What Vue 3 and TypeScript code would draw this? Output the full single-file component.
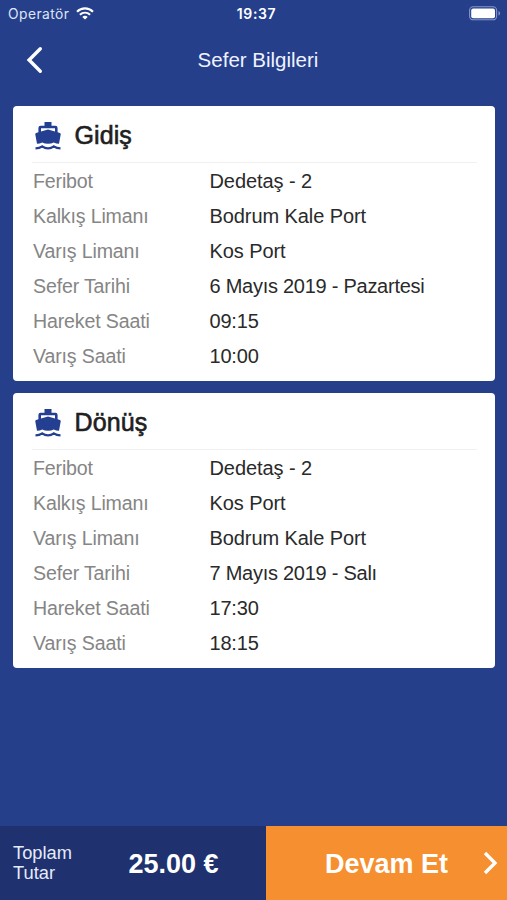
<script setup lang="ts">
interface Row {
  label: string
  value: string
  kind?: 'date' | 'time'
}
interface Trip {
  title: string
  rows: Row[]
}

const trips: Trip[] = [
  {
    title: 'Gidiş',
    rows: [
      { label: 'Feribot', value: 'Dedetaş - 2' },
      { label: 'Kalkış Limanı', value: 'Bodrum Kale Port' },
      { label: 'Varış Limanı', value: 'Kos Port' },
      { label: 'Sefer Tarihi', value: '6 Mayıs 2019 - Pazartesi', kind: 'date' },
      { label: 'Hareket Saati', value: '09:15', kind: 'time' },
      { label: 'Varış Saati', value: '10:00', kind: 'time' },
    ],
  },
  {
    title: 'Dönüş',
    rows: [
      { label: 'Feribot', value: 'Dedetaş - 2' },
      { label: 'Kalkış Limanı', value: 'Kos Port' },
      { label: 'Varış Limanı', value: 'Bodrum Kale Port' },
      { label: 'Sefer Tarihi', value: '7 Mayıs 2019 - Salı', kind: 'date' },
      { label: 'Hareket Saati', value: '17:30', kind: 'time' },
      { label: 'Varış Saati', value: '18:15', kind: 'time' },
    ],
  },
]
</script>

<template>
  <div class="screen">
    <div class="status">
      <div class="carrier">
        <span>Operatör</span>
        <svg width="18" height="13" viewBox="0 0 18 13" fill="none" stroke="#fff" stroke-width="2.1">
          <path d="M1 4.7C5.6.2 12.4.2 17 4.7" />
          <path d="M3.9 7.8c3-2.8 7.2-2.8 10.2 0" />
          <path d="M9 12.6 6.3 9.9c1.5-1.4 3.9-1.4 5.4 0z" fill="#fff" stroke="none" />
        </svg>
      </div>
      <span class="clock">19:37</span>
      <svg class="battery" width="32" height="15" viewBox="0 0 32 15">
        <rect x=".6" y=".8" width="27" height="13" rx="3.6" fill="none" stroke="#8796c8" stroke-width="1.1" />
        <rect x="2.2" y="2.4" width="23.8" height="9.8" rx="2" fill="#fff" />
        <path d="M29.5 5c2 .8 2 3.8 0 4.6z" fill="#8796c8" />
      </svg>
    </div>

    <header class="nav">
      <button class="back" aria-label="Geri">
        <svg width="18" height="28" viewBox="0 0 18 28" fill="none" stroke="#fff" stroke-width="3.4" stroke-linecap="round">
          <path d="M14.3 2.800 3.100 14 14.300 25.200" />
        </svg>
      </button>
      <h1>Sefer Bilgileri</h1>
    </header>

    <main class="trips">
      <section v-for="trip in trips" :key="trip.title" class="card">
        <div class="card-head">
          <svg width="26" height="29" viewBox="0 0 26 29">
            <path
              fill="#243f92"
              fill-rule="evenodd"
              d="M9.500 1h7v3.800h3.900q2.200 0 2.200 2.200v4.300l2.300.8q1 .4.800 1.400L24 22.700q-2.900 0-5.200-1.300-2.600 1.300-5.800 1.300t-5.800-1.300Q4.900 22.700 2 22.700L.3 13.500q-.2-1 .8-1.400l2.300-.8V7q0-2.200 2.200-2.200h3.900zM6 7.200v3.300L13 8.500l7 2V7.200z"
            />
            <path d="M.5 27.400q4 0 6.700-2Q9.800 27.400 13 27.400t5.800-2Q21.500 27.400 25.500 27.400" fill="none" stroke="#243f92" stroke-width="2.100" />
          </svg>
          <h2>{{ trip.title }}</h2>
        </div>
        <dl>
          <div v-for="row in trip.rows" :key="row.label" class="row">
            <dt>{{ row.label }}</dt>
            <dd :class="row.kind">{{ row.value }}</dd>
          </div>
        </dl>
      </section>
    </main>

    <footer class="footer">
      <div class="total">
        <span class="total-label">Toplam<br />Tutar</span>
        <strong>25.00 €</strong>
      </div>
      <button class="next">
        <span>Devam Et</span>
        <svg width="16" height="24" viewBox="0 0 16 24" fill="none" stroke="#fff" stroke-width="3.4">
          <path d="M2 2 12 12 2 22" />
        </svg>
      </button>
    </footer>
  </div>
</template>

<style>
body {
  margin: 0;
  background: #253f8b;
}
</style>

<style scoped>
.screen {
  display: flex;
  flex-direction: column;
  height: 900px;
  overflow: hidden;
  background: #253f8b;
  font-family: 'Liberation Sans', Arial, sans-serif;
}
button {
  padding: 0;
  border: 0;
  background: none;
  font: inherit;
  color: inherit;
}
h1,
h2,
dl,
dt,
dd {
  margin: 0;
}
.status {
  display: grid;
  grid-template-columns: 1fr auto 1fr;
  align-items: center;
  height: 27px;
  padding: 0 6px 0 8px;
  color: #fff;
  font-family: Inter, Roboto, sans-serif;
}
.carrier {
  display: flex;
  align-items: center;
  gap: 7px;
  color: #dfe5f7;
  font-size: 13.8px;
  letter-spacing: 0.45px;
}
.clock {
  padding-left: 4px;
  font-weight: 600;
  font-size: 14px;
  letter-spacing: 0.6px;
}
.battery {
  justify-self: end;
}
.nav {
  display: grid;
  grid-template-columns: 60px 1fr 51px;
  align-items: center;
  height: 66px;
}
.back {
  display: flex;
  padding-left: 26px;
}
.nav h1 {
  color: #f0f3ff;
  font-size: 20.5px;
  font-weight: 400;
  text-align: center;
}
.trips {
  display: flex;
  flex: 1;
  flex-direction: column;
  gap: 12px;
  padding: 13px 12px 0 13px;
}
.card {
  box-sizing: border-box;
  height: 275px;
  padding: 0 18px 0 19px;
  border-radius: 4px;
  background: #fff;
}
.card-head {
  display: flex;
  align-items: center;
  gap: 14px;
  box-sizing: border-box;
  height: 57px;
  padding: 2px 0 0 2.5px;
  border-bottom: 1px solid #f0f0f0;
}
.card-head h2 {
  color: #202020;
  font-size: 25px;
  font-weight: 400;
  letter-spacing: 0.1px;
  -webkit-text-stroke: 0.6px #202020;
}
dl {
  padding-top: 1px;
}
.row {
  display: grid;
  grid-template-columns: 176.5px 1fr;
  align-items: center;
  height: 35px;
  padding-left: 1px;
  font-size: 20px;
  white-space: nowrap;
}
dt {
  color: #858585;
  font-size: 19.6px;
  letter-spacing: -0.16px;
}
dd {
  color: #2a2a2a;
  letter-spacing: -0.08px;
}
.date {
  letter-spacing: -0.26px;
}
.time {
  letter-spacing: -0.2px;
}
.footer {
  display: grid;
  grid-template-columns: 266px 1fr;
  height: 74px;
  color: #fff;
}
.total {
  display: flex;
  align-items: center;
  padding-left: 13px;
  background: #1f326f;
}
.total-label {
  width: 115.5px;
  color: #e6ebfa;
  font-size: 18.3px;
  line-height: 20px;
}
.total strong {
  padding-top: 2px;
  font-size: 27px;
}
.next {
  display: flex;
  align-items: center;
  justify-content: flex-end;
  gap: 35px;
  padding-right: 8px;
  background: #f58f30;
  font-size: 27px;
  font-weight: 700;
}
.next span {
  padding-top: 2px;
}
</style>
